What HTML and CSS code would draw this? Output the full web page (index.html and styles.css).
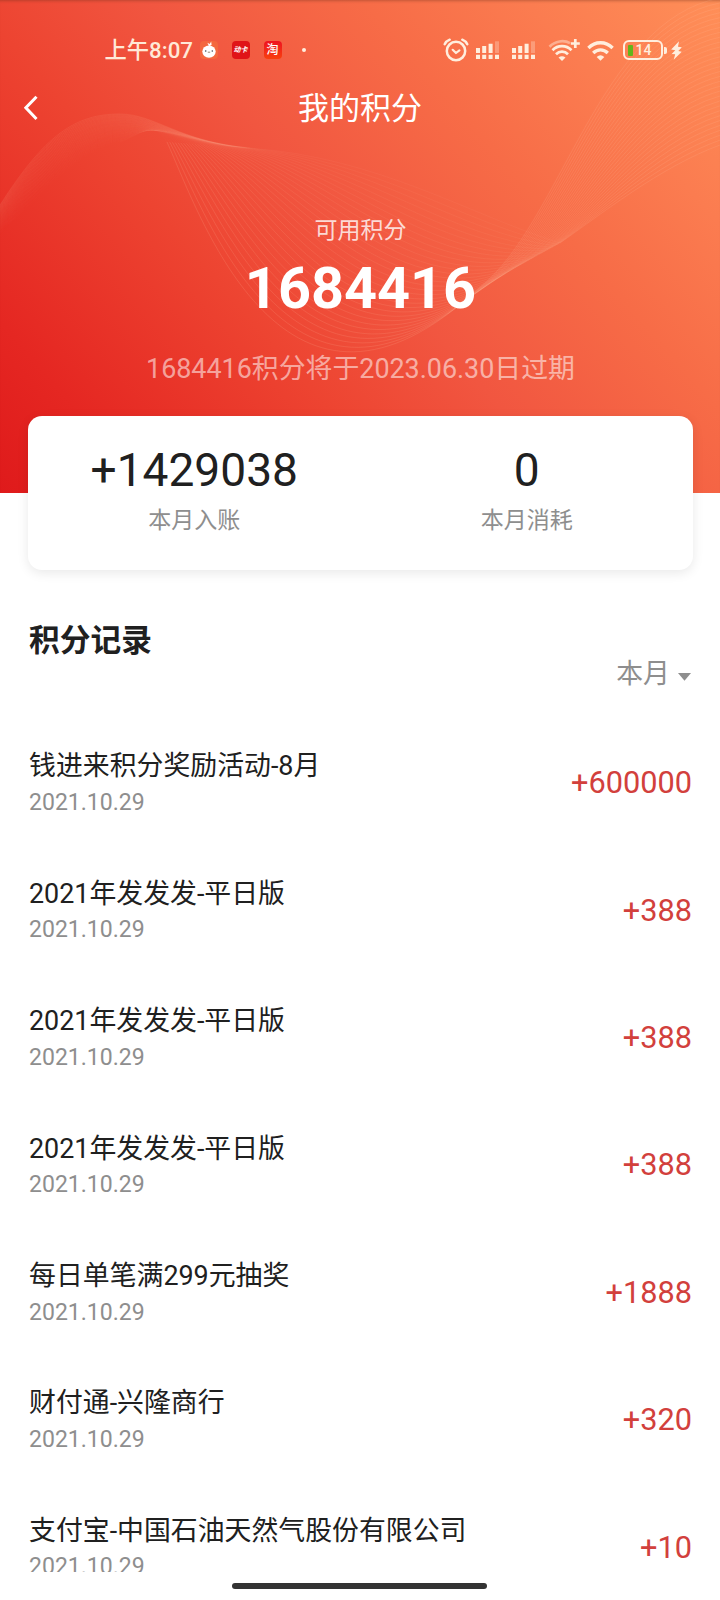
FILE: index.html
```html
<!DOCTYPE html>
<html lang="zh-CN">
<head>
<meta charset="utf-8">
<title>我的积分</title>
<link rel="stylesheet" href="styles.css">
</head>
<body>
<div class="screen">
  <header class="hero">
    <svg class="waves" id="waves" width="720" height="493" viewBox="0 0 720 493" fill="none" aria-hidden="true"></svg>
    <div class="status">
      <span class="time">上午8:07</span>
      <svg class="chick" width="18" height="18" viewBox="0 0 18 18">
        <rect width="18" height="18" rx="4" fill="#f4683f"/>
        <path d="M9 5.2L7.4 1.7L9.7 3L11.2.6L11.6 4Z" fill="#fff"/>
        <ellipse cx="9" cy="10.6" rx="6.7" ry="6.2" fill="#fff"/>
        <circle cx="5.7" cy="10" r=".8" fill="#39454f"/><circle cx="12.3" cy="10" r=".8" fill="#39454f"/>
        <path d="M7.8 11.2h2.4" stroke="#8c7a60" stroke-width=".9"/>
      </svg>
      <span class="app app-card">动卡</span>
      <span class="app app-tao">淘</span>
      <span class="dot"></span>
      <svg class="alarm" width="26" height="24" viewBox="0 0 26 24" fill="none" stroke="#ffeedd" stroke-width="2.5" stroke-linecap="round" stroke-linejoin="round">
        <circle cx="13" cy="13" r="9.2"/><path d="M9.7 11.8L13 15L16.4 12.4" stroke-width="2.2"/><path d="M1.7 6.2C2.8 4 4.4 2.6 6.7 1.7M24.3 6.2C23.2 4 21.6 2.6 19.3 1.7"/>
      </svg>
      <svg class="signal" width="23" height="18" viewBox="0 0 23 18" fill="#ffeedd">
        <path d="M0 7h4v5H0zM6.2 5h4v7h-4zM12.6 2.8h4V12h-4zM0 13.8h4V18H0zM6.2 13.8h4V18h-4zM12.6 13.8h4V18h-4zM19 13.8h4V18h-4z"/><path d="M19 .3h4V12h-4z" opacity=".3"/>
      </svg>
      <svg class="signal signal-2" width="23" height="18" viewBox="0 0 23 18" fill="#ffeedd">
        <path d="M0 7h4v5H0zM6.2 5h4v7h-4zM12.6 2.8h4V12h-4zM0 13.8h4V18H0zM6.2 13.8h4V18h-4zM12.6 13.8h4V18h-4zM19 13.8h4V18h-4z"/><path d="M19 .3h4V12h-4z" opacity=".3"/>
      </svg>
      <svg class="wifi-plus" width="32" height="24" viewBox="0 0 32 24" fill="none" stroke="#ffeedd" stroke-width="2.7">
        <path d="M1.5 8.7C7 3 16 1.6 22 5.2" opacity=".45"/>
        <path d="M4.5 12.2C9.8 6.8 18.2 6.8 23.5 12.2M8 16.2C11.5 12.7 16.5 12.7 20 16.2"/>
        <path d="M10.5 19.5Q14 16.8 17.5 19.5L14 23Z" fill="#ffeedd" stroke="none"/>
        <path d="M27.3 1v9M22.8 5.5h9"/>
      </svg>
      <svg class="wifi" width="27" height="21" viewBox="0 0 27 21" fill="none" stroke="#ffeedd" stroke-width="3.3">
        <path d="M1.4 8C8.2 1 18.8 1 25.6 8M6.2 13C10.4 8.8 16.6 8.8 20.8 13"/>
        <path d="M9.7 17Q13.5 13.6 17.3 17L13.5 20.8Z" fill="#ffeedd" stroke="none"/>
      </svg>
      <span class="battery"><i class="charge"></i><b>14</b></span>
      <i class="nub"></i>
      <svg class="bolt" width="11" height="19" viewBox="0 0 11 19" fill="#ffeedd"><path d="M8 .3L.2 8.4L4.3 9.2L.7 13.1L4.2 13.3L2.7 18.8L10.7 10.7L7.3 10.1L10.8 6.2L7 5.8Z"/></svg>
    </div>
    <div class="nav">
      <svg class="back" width="14" height="26" viewBox="0 0 14 26" fill="none" stroke="#fff" stroke-width="3"><path d="M12.5 1.8L1.9 12.8L12.5 24"/></svg>
      <h1>我的积分</h1>
    </div>
    <div class="label">可用积分</div>
    <div class="total">1684416</div>
    <div class="expiry">1684416积分将于2023.06.30日过期</div>
  </header>
  <section class="card">
    <div class="stat"><div class="num">+1429038</div><div class="cap">本月入账</div></div>
    <div class="stat"><div class="num">0</div><div class="cap">本月消耗</div></div>
  </section>
  <section class="records">
    <h2>积分记录</h2>
    <div class="filter">本月<svg width="13" height="8" viewBox="0 0 13 8"><path d="M0 0h13L6.5 7.8z" fill="#8e8e8e"/></svg></div>
    <ul>
      <li><div><p class="name">钱进来积分奖励活动-8月</p><p class="date">2021.10.29</p></div><span>+600000</span></li>
      <li><div><p class="name">2021年发发发-平日版</p><p class="date">2021.10.29</p></div><span>+388</span></li>
      <li><div><p class="name">2021年发发发-平日版</p><p class="date">2021.10.29</p></div><span>+388</span></li>
      <li><div><p class="name">2021年发发发-平日版</p><p class="date">2021.10.29</p></div><span>+388</span></li>
      <li><div><p class="name">每日单笔满299元抽奖</p><p class="date">2021.10.29</p></div><span>+1888</span></li>
      <li><div><p class="name">财付通-兴隆商行</p><p class="date">2021.10.29</p></div><span>+320</span></li>
      <li><div><p class="name">支付宝-中国石油天然气股份有限公司</p><p class="date">2021.10.29</p></div><span>+10</span></li>
    </ul>
  </section>
  <footer class="home"><i></i></footer>
</div>
<script src="waves.js"></script>
</body>
</html>
```
FILE: waves.js
```js
// Draws the family of curves behind the header, blended between an upper and a lower edge.
const upper = [0,205, 45,135, 75,114, 120,114, 155,114, 180,142, 250,148, 380,158, 470,215, 560,243, 600,215, 660,167, 720,145];
const lower = [0,236, 45,190, 80,152, 120,142, 140,136, 152,118, 167,142, 200,215, 285,470, 480,287, 560,225, 600,20, 720,-2];
const svg = document.getElementById('waves');
const count = 30;
const add = (points, opacity) => {
  const el = document.createElementNS('http://www.w3.org/2000/svg', 'path');
  el.setAttribute('d', 'M' + points.slice(0, 2).join(' ') + 'C' + points.slice(2).join(' '));
  el.setAttribute('stroke', '#ffc8a8');
  el.setAttribute('stroke-opacity', opacity.toFixed(3));
  svg.appendChild(el);
};
for (let i = 0; i <= count; i++) {
  const t = i / count;
  const p = upper.map((v, k) => +(v + (lower[k] - v) * t).toFixed(1));
  add(p.slice(0, 8), 0.09 * (1 - t) + 0.005);
  add(p.slice(6, 14), 0.07 * (1 - t) + 0.02);
  add(p.slice(12, 20), 0.05 + 0.1 * t);
  add(p.slice(18, 26), 0.14);
}
```
FILE: styles.css
```css
* { box-sizing: border-box; margin: 0; padding: 0; }
body { background: #fff; font-family: Roboto, "Noto Sans CJK SC", sans-serif; color: #202020; }
.screen { height: 1600px; display: flex; flex-direction: column; overflow: hidden; }
.hero {
  position: relative; flex: none; height: 493px; color: #fff; text-align: center;
  background: linear-gradient(49deg, #df1a1b 0%, #e52722 13%, #ed4431 35%, #f15640 50%, #f76c47 69%, #fb7c50 83%, #ff8f58 100%);
  box-shadow: inset 0 3px 3px -2px rgba(110, 50, 30, .4);
}
.waves { position: absolute; left: 0; top: 0; }
.status { position: relative; display: flex; align-items: center; height: 76px; padding: 24px 0 0 104.5px; }
.time { width: 95px; text-align: left; font-size: 22.3px; font-weight: 500; line-height: 30px; color: #ffe9d8; white-space: nowrap; }
.status > * { flex: none; }
.app { width: 18px; height: 18px; border-radius: 4px; line-height: 18px; text-align: center; white-space: nowrap; }
.app-card { margin-left: 14px; background: #e01418; font-size: 7px; font-weight: 700; font-style: italic; }
.app-tao { margin-left: 14px; background: linear-gradient(#ee1220, #f8400e); font-size: 12px; font-weight: 500; }
.dot { width: 4px; height: 4px; margin-left: 20px; border-radius: 50%; background: #ffeedd; }
.alarm { margin-left: 137px; }
.signal { margin: 0 0 0 7px; }
.signal-2 { margin-left: 13px; }
.wifi-plus { margin-left: 13px; }
.wifi { margin-left: 7px; }
.battery { display: flex; align-items: center; width: 40px; height: 20px; margin-left: 9px; padding-left: 3px; border: 2px solid #ffeedd; border-radius: 6px; }
.charge { width: 5px; height: 11px; border-radius: 1px; background: #62b51b; }
.battery b { margin-left: 3px; font-size: 14px; line-height: 16px; font-weight: 500; color: #ffeedd; }
.nub { width: 3px; height: 7px; margin-left: 1px; border-radius: 0 2px 2px 0; background: #ffeedd; }
.bolt { margin-left: 4.5px; }
.nav { position: relative; display: grid; grid-template-columns: 60px 1fr 60px; align-items: center; height: 66px; }
.back { margin-left: 24px; margin-top: -3px; }
.nav h1 { font-size: 31px; line-height: 44px; font-weight: 400; }
.label { position: relative; margin-top: 72px; padding-left: 1px; font-size: 23.04px; line-height: 33px; color: rgba(255,255,255,.8); }
.total { position: relative; margin-top: 8px; padding-left: 1px; font-size: 57.6px; line-height: 68px; font-weight: 700; }
.expiry { position: relative; margin-top: 27px; padding-left: 1px; font-size: 26.88px; line-height: 38px; color: rgba(255,255,255,.55); }
.card {
  position: relative; flex: none; display: grid; grid-template-columns: 1fr 1fr;
  height: 154px; margin: -77px 27px 0 28px; padding-top: 26px;
  background: #fff; border-radius: 14px; box-shadow: 0 3px 12px rgba(0,0,0,.09); text-align: center;
}
.num { font-size: 46.08px; line-height: 56px; }
.cap { margin-top: 6px; font-size: 23.04px; line-height: 34px; color: #8e8e8e; }
.records { flex: 1; min-height: 0; padding: 49px 28px 0 29px; overflow: hidden; }
.records h2 { font-size: 30.72px; line-height: 44px; font-weight: 700; }
.filter { display: flex; justify-content: flex-end; align-items: center; margin-top: -8px; font-size: 26.88px; line-height: 38px; color: #8e8e8e; }
.filter svg { margin: 5px 1px 0 8px; }
.records ul { list-style: none; margin-top: 26.5px; }
.records li { display: flex; justify-content: space-between; align-items: center; height: 127.4px; }
.name { font-size: 26.88px; line-height: 38px; }
.date { margin-top: 1.5px; font-size: 23.04px; line-height: 32px; color: #8e8e8e; }
.records li span { font-size: 30.72px; line-height: 40px; color: #d2403c; }
.home { flex: none; display: flex; justify-content: center; height: 28px; padding: 11px 2px 0 0; }
.home i { width: 255px; height: 6px; border-radius: 3px; background: #333; }
```
